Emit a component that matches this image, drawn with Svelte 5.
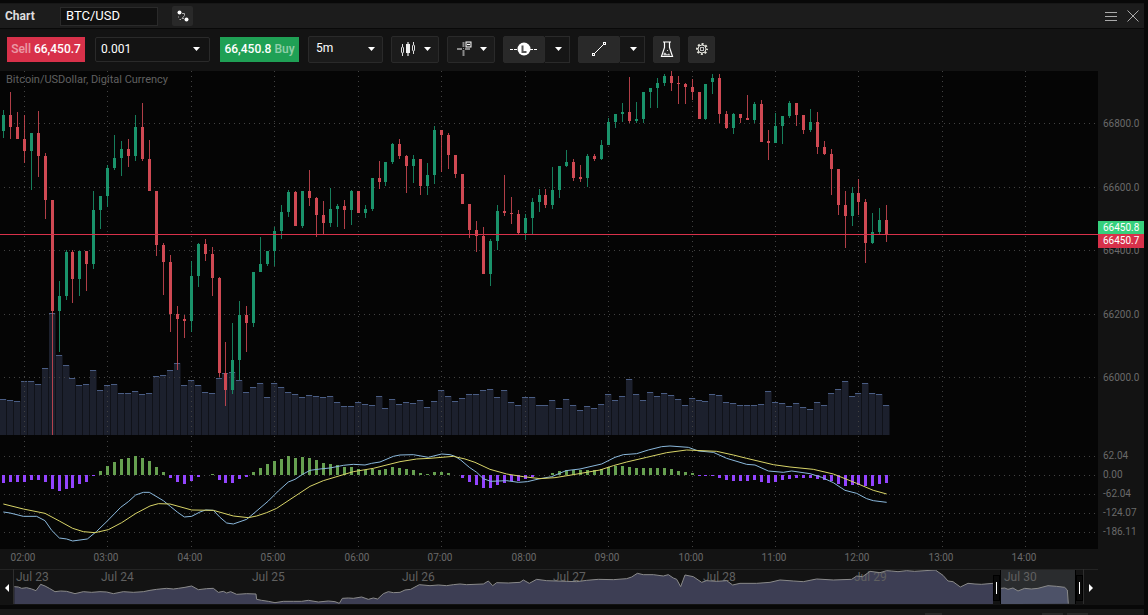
<script>
    const STEP = 6.956;
    const PLOT_HEIGHT = 478;
    const VOLUME_BASE = 364;
    const MACD_ZERO = 404;

    // direction, high, body top, body bottom, low
    const candles = `G39,44,60,67 R21,44,56,68 R41,56,68,68 R44,68,80,92 G62,62,80,119 R40,62,85,106 R82,85,129,148 R129,129,240,364
        G210,225,240,281 G179,181,225,229 R179,181,208,232 G180,180,208,225 R180,180,193,220 G120,139,193,198 G125,125,139,158 G94,97,125,136
        G64,87,97,99 G70,78,87,105 R68,78,85,96 G44,56,85,90 R32,56,88,90 R69,88,120,120 R120,120,174,185 R172,174,191,224
        R184,191,243,261 R235,243,248,299 R244,248,250,267 G190,205,250,261 G172,173,205,216 R168,173,183,190 R176,183,207,225 R206,207,302,306
        R271,302,319,335 G252,289,319,323 G230,244,289,309 R235,244,252,281 G201,201,252,256 G166,193,201,201 G180,180,193,195 G156,160,180,195
        G134,141,160,168 G119,121,141,146 R120,121,155,155 G120,120,155,157 R99,120,127,135 R126,127,144,166 R130,144,152,163 G117,138,152,156
        G133,135,138,156 R129,135,139,158 G119,120,139,154 R120,120,142,142 G134,138,142,147 G107,107,138,140 R90,107,111,118 G91,91,111,115
        G72,73,91,93 R68,73,85,88 R84,85,95,122 G84,88,95,112 R88,88,115,124 G92,104,115,124 G55,59,104,113 R59,59,64,101
        R62,64,84,98 R84,84,103,107 R103,103,133,133 R133,133,159,167 R150,159,165,181 R156,165,203,203 G168,170,203,215 G134,140,170,179
        R104,140,142,145 R126,142,143,153 R139,143,162,163 G143,147,162,169 G127,131,147,163 G118,124,131,141 R118,124,134,137 G96,119,134,138
        G95,95,119,127 G79,91,95,96 R88,91,107,110 R94,106,108,111 G83,85,107,116 R83,85,88,90 G69,74,88,89 G47,51,74,74
        G43,43,51,57 G32,41,43,51 R6,41,50,52 G31,48,50,52 G21,21,48,52 G17,17,21,37 G7,12,17,37 G3,5,12,15
        R0,5,12,20 R5,12,13,33 R12,13,16,33 R8,16,21,29 R21,21,48,48 G13,13,48,49 G3,7,11,23 R3,7,43,52
        R40,43,57,58 G42,43,57,63 R43,43,47,52 R24,47,49,49 G31,33,49,52 R29,33,71,71 R59,70,72,89 G42,55,72,72
        G45,45,55,73 G30,32,45,47 R32,32,44,55 R44,44,59,63 G38,51,59,61 R41,51,76,83 R70,76,83,84 R78,83,98,124
        R98,98,134,144 R120,134,145,177 G116,122,145,155 R108,122,131,144 R128,131,172,192 G142,161,172,173 G137,149,161,163 R134,149,163,171`
        .split(/\s+/)
        .map((item, i) => {
            const [high, top, bottom, low] = item.slice(1).split(',').map(Number);
            return { x: slot(i), up: item[0] === 'G', high, top, bottom, low };
        });

    const volumes = [
        36, 35, 34, 54, 54, 51, 67, 122, 80, 70, 57, 50, 51, 65, 45, 50, 51, 42, 42, 44, 41, 42, 59, 60, 65, 72, 50, 55, 50, 43, 42, 57,
        62, 63, 55, 43, 48, 52, 38, 52, 48, 43, 41, 38, 40, 39, 38, 39, 33, 29, 29, 33, 31, 30, 39, 27, 36, 31, 33, 32, 35, 28, 34, 45,
        39, 34, 37, 41, 41, 45, 46, 38, 45, 33, 30, 38, 38, 30, 30, 35, 27, 36, 30, 25, 29, 27, 31, 41, 35, 39, 56, 41, 35, 43, 39, 42,
        40, 36, 30, 37, 35, 34, 41, 40, 33, 32, 30, 30, 30, 31, 44, 33, 32, 29, 32, 28, 26, 33, 30, 42, 46, 54, 39, 42, 52, 42, 41, 30
    ];

    const histogram = [
        -8, -7, -7, -7, -5, -5, -7, -14, -16, -14, -13, -9, -7, -1, 4, 9, 13, 16, 17, 19, 17, 14, 8, 3, -3, -7, -9, -6, -2, 0, 1, -5,
        -8, -8, -4, -2, 3, 7, 11, 14, 16, 19, 17, 18, 17, 15, 12, 11, 10, 8, 8, 6, 5, 6, 5, 6, 8, 7, 6, 5, 2, 1, 3, 3,
        2, 0, -3, -7, -10, -13, -13, -10, -8, -6, -6, -4, -2, 0, 0, 2, 4, 5, 5, 5, 5, 5, 6, 8, 9, 9, 8, 7, 7, 7, 7, 7,
        6, 4, 3, 2, -1, -1, -1, -3, -5, -6, -6, -6, -5, -7, -8, -7, -5, -4, -3, -3, -3, -4, -5, -6, -9, -11, -10, -10, -11, -11, -9, -8
    ];

    // the line series are stored at three units per pixel
    const macd = '10,246 30,249 70,259 110,259 135,272 155,301 178,324 200,327 218,333 262,327 290,304 322,273 362,232 385,215 407,195 430,187 448,187 490,212 512,230 533,247 553,261 575,259 600,246 617,240 640,241 660,262 680,279 700,282 720,275 740,268 765,247 805,213 835,183 865,156 885,148 908,133 930,121 960,117 990,114 1030,106 1060,103 1095,105 1115,100 1140,96 1180,79 1200,75 1240,74 1285,82 1325,72 1350,74 1365,79 1382,90 1408,112 1430,127 1450,146 1472,154 1520,152 1555,157 1582,155 1620,146 1655,140 1698,122 1740,117 1805,102 1845,82 1870,74 1910,71 1945,60 1985,50 2010,48 2065,52 2095,63 2140,67 2180,85 2240,103 2265,105 2305,123 2350,127 2375,123 2430,131 2465,142 2500,158 2535,181 2570,190 2600,206 2620,212 2660,217';
    const signal = '10,222 70,237 135,250 178,273 218,295 250,305 285,308 325,299 365,278 408,250 450,228 475,221 510,222 575,240 640,241 700,258 745,263 770,258 800,248 830,235 930,169 970,152 1020,137 1060,125 1120,115 1200,95 1250,87 1290,85 1360,79 1395,87 1425,97 1470,118 1520,132 1570,140 1620,146 1665,143 1720,134 1800,120 1840,107 1880,96 1940,82 2000,68 2060,60 2150,64 2200,75 2240,85 2320,104 2370,111 2440,118 2500,132 2570,160 2620,181 2660,192';
    const history = '43,470 55,471 65,475 80,473 95,477 108,482 122,463 135,468 148,475 165,485 182,483 200,484 225,491 250,485 275,487 300,485 320,486 340,491 370,485 400,487 430,485 450,481 470,478 500,475 520,477 535,475 555,472 575,468 595,479 620,476 640,475 655,487 670,484 680,489 692,485 710,493 740,491 768,492 770,508 785,511 805,514 825,518 850,514 880,514 905,514 925,511 955,516 985,513 1005,515 1018,520 1027,505 1045,504 1060,505 1085,501 1105,508 1120,504 1133,507 1150,491 1165,485 1180,488 1200,487 1215,480 1232,478 1245,471 1258,464 1290,467 1315,465 1340,467 1360,464 1380,462 1400,464 1450,462 1465,453 1478,467 1490,458 1525,459 1560,457 1570,450 1588,460 1610,448 1640,452 1700,454 1730,455 1760,451 1795,448 1840,449 1880,446 1895,441 1912,430 1930,434 1960,434 1990,438 2005,434 2020,444 2030,448 2042,470 2055,435 2080,440 2105,457 2120,452 2150,454 2180,452 2198,465 2220,460 2270,460 2310,457 2340,450 2380,453 2410,455 2450,447 2500,450 2555,448 2570,438 2588,440 2610,424 2640,428 2660,422 2674,423 2694,425 2720,422 2744,424 2775,422 2806,420 2829,436 2844,453 2859,455 2881,471 2904,460 2925,462 2944,463 2979,460';
    const selected = '3003,475 3014,474 3024,478 3039,474 3054,483 3074,475 3094,477 3114,475 3144,467 3170,469 3194,472 3202,480 3205,521';

    const hours = [
        ['02:00', 24], ['03:00', 107], ['04:00', 191], ['05:00', 274], ['06:00', 358], ['07:00', 441], ['08:00', 525],
        ['09:00', 608], ['10:00', 692], ['11:00', 775], ['12:00', 858], ['13:00', 942], ['14:00', 1025]
    ];
    const prices = [['66800.0', 52], ['66600.0', 116], ['66400.0', 179], ['66200.0', 243], ['66000.0', 306]];
    const levels = [['62.04', 385], ['0.00', 404], ['-62.04', 423], ['-124.07', 442], ['-186.11', 461]];
    const days = [['Jul 23', 16], ['Jul 24', 101], ['Jul 25', 252], ['Jul 26', 402], ['Jul 27', 553], ['Jul 28', 703], ['Jul 29', 854], ['Jul 30', 1004]];

    let symbol = $state('BTC/USD');
    let amount = $state('0.001');
    let period = $state('5m');

    function slot(i) {
        return Math.floor(3.4 + i * STEP);
    }
</script>

{#snippet caret()}
    <svg class="caret" width="7" height="4" viewBox="0 0 7 4" aria-hidden="true"><path d="M0 0h7L3.5 4z" fill="#fff" /></svg>
{/snippet}

<main>
    <header>
        <h1>Chart</h1>
        <input class="symbol" aria-label="Symbol" bind:value={symbol} />
        <button class="link" aria-label="Link window">
            <svg width="12" height="12" viewBox="0 0 12 12">
                <circle cx="2.500" cy="2.500" r="2" fill="#fff" />
                <circle cx="9.500" cy="9.500" r="2" fill="#fff" />
                <path d="M5 3.500h2.500v2L5 8.500h2M1.500 6.500v1M2.500 9.500h1.500" fill="none" stroke="#aaa" />
            </svg>
        </button>
        <div class="window">
            <button aria-label="Menu">
                <svg width="12" height="11" viewBox="0 0 12 11"><path d="M0 1.500h12M0 5.500h12M0 9.500h12" stroke="#aaa" /></svg>
            </button>
            <button aria-label="Close">
                <svg width="12" height="12" viewBox="0 0 12 12"><path d="M.5.5l11 11M11.500.5l-11 11" stroke="#aaa" /></svg>
            </button>
        </div>
    </header>

    <div class="toolbar">
        <div class="trade">
            <button class="sell"><span>Sell</span> 66,450.7</button>
            <div class="field amount">
                <select aria-label="Amount" bind:value={amount}>
                    <option>0.001</option>
                    <option>0.01</option>
                    <option>0.1</option>
                </select>
                {@render caret()}
            </div>
            <button class="buy">66,450.8 <span>Buy</span></button>
        </div>
        <div class="field period">
            <select aria-label="Period" bind:value={period}>
                <option>1m</option>
                <option>5m</option>
                <option>1h</option>
            </select>
            {@render caret()}
        </div>
        <button class="tool wide" aria-label="Chart type">
            <svg width="16" height="16" viewBox="0 0 16 16">
                <path d="M2.500 3v3M2.500 12v3M13.500 1v3M13.500 10v3" stroke="#ddd" />
                <rect x="1.500" y="6" width="2" height="6" rx="1" fill="none" stroke="#ddd" />
                <rect x="12.500" y="4" width="2" height="6" rx="1" fill="none" stroke="#ddd" />
                <path d="M8 1v14" stroke="#999" stroke-width="2" />
                <rect x="6" y="3" width="4" height="9" fill="#eee" />
            </svg>
            {@render caret()}
        </button>
        <button class="tool wide" aria-label="Crosshair">
            <svg width="16" height="16" viewBox="0 0 16 16">
                <path d="M1 8h5M9 8h5M7.500 1v5M7.500 9v6" stroke="#888" stroke-width="2" />
                <rect x="7" y="7" width="1" height="1" fill="#888" />
                <rect x="10" y="1" width="5" height="5" fill="#333" stroke="#fff" />
                <path d="M11 3.500h3" stroke="#fff" />
            </svg>
            {@render caret()}
        </button>
        <div class="split">
            <button class="tool" aria-label="Order lines">
                <svg width="28" height="14" viewBox="0 0 28 14">
                    <path d="M0 7.500h28" stroke="#fff" stroke-dasharray="3 1" />
                    <circle cx="14" cy="7" r="6.500" fill="#fff" />
                    <path d="M12.500 3.500v6.500h4" fill="none" stroke="#555" stroke-width="2" />
                </svg>
            </button>
            <button class="more" aria-label="Order line options">{@render caret()}</button>
        </div>
        <div class="split">
            <button class="tool" aria-label="Draw line">
                <svg width="14" height="14" viewBox="0 0 14 14">
                    <path d="M3 11l8-8" stroke="#fff" />
                    <rect x=".5" y="11.500" width="2" height="2" fill="none" stroke="#fff" />
                    <rect x="11.500" y=".5" width="2" height="2" fill="none" stroke="#fff" />
                </svg>
            </button>
            <button class="more" aria-label="Drawing tools">{@render caret()}</button>
        </div>
        <button class="tool square" aria-label="Indicators">
            <svg width="14" height="17" viewBox="0 0 14 17">
                <path d="M3 1h8M4.500 1v5.500L1.500 15.500h11L9.500 6.500V1" fill="none" stroke="#fff" stroke-width="1.200" />
                <path d="M3.500 14.500v-2l1.500-1 2 2 2-1 1.500 2z" fill="#ccc" />
                <rect x="7" y="9" width="1" height="1" fill="#ccc" />
            </svg>
        </button>
        <button class="tool square" aria-label="Settings">
            <svg width="14" height="14" viewBox="0 0 14 14" fill="none" stroke="#e4e4dc">
                <circle cx="7" cy="7" r="5" stroke-width="2" stroke-dasharray="2 1.927" stroke-dashoffset="1" />
                <circle cx="7" cy="7" r="4" />
                <rect x="5.500" y="5.500" width="3" height="3" stroke="#bbb" />
            </svg>
        </button>
    </div>

    <div class="chart">
        <svg class="plot" height={PLOT_HEIGHT} role="img" aria-label="Bitcoin/USDollar candles">
            <g class="volume">
                {#each volumes as height, i}
                    <rect class="bar-back" x={slot(i) - 3} y={VOLUME_BASE - height} width="7" {height} />
                    <rect class="bar" x={slot(i) - 3} y={VOLUME_BASE - height} width="6" {height} />
                    <rect class="cap" x={slot(i) - 3} y={VOLUME_BASE - height} width="6" height="1" />
                {/each}
            </g>
            <g class="grid">
                {#each hours as [, x]}
                    <line x1={x + 0.5} x2={x + 0.5} y1="0" y2="476" />
                {/each}
                {#each [...prices, ...levels] as [, y]}
                    <line x1="4" x2="100%" y1={y + 0.5} y2={y + 0.5} />
                {/each}
            </g>
            <text class="title" x="6" y="12">Bitcoin/USDollar, Digital Currency</text>
            {#each candles as c}
                <g class={c.up ? 'up' : 'down'}>
                    <rect class="wick" x={c.x} y={c.high} width="1" height={c.low - c.high} />
                    <rect x={c.x - 1} y={c.top} width="3" height={c.bottom - c.top} />
                </g>
            {/each}
            {#each histogram as value, i}
                <rect
                    fill={value > 0 ? '#66a050' : '#9344ff'}
                    x={slot(i) - 1}
                    y={value > 0 ? MACD_ZERO - value : MACD_ZERO}
                    width="3"
                    height={Math.abs(value)}
                />
            {/each}
            <g class="series" transform="translate(0 359) scale(.33333)">
                <polyline points={macd} stroke="#8ab8dc" />
                <polyline points={signal} stroke="#d8d468" />
            </g>
            <rect class="last" x="0" y="163" width="100%" height="1" />
        </svg>
        <svg class="scale" height={PLOT_HEIGHT}>
            {#each prices as [label, y]}
                <text x="5" y={y + 4}>{label}</text>
            {/each}
            {#each levels as [label, y]}
                <text x="5" y={y + 3}>{label}</text>
            {/each}
            <rect y="150" width="46" height="13" fill="#36d07c" />
            <rect y="163" width="46" height="14" fill="#d8314a" />
            <text class="tag" x="5" y="160">66450.8</text>
            <text class="tag" x="5" y="173">66450.7</text>
        </svg>
    </div>

    <svg class="times" height="20">
        {#each hours as [label, x]}
            <text x={x - 1} y="12" text-anchor="middle">{label}</text>
        {/each}
    </svg>

    <svg class="overview" height="36">
        <rect class="range" x="1001" y="1" width="74" height="34" />
        <g class="area" transform="translate(0 -139) scale(.33333)">
            <polygon points="43,522 {history} 2979,522" fill="#3d3e54" />
            <polygon points="3003,522 {selected}" fill="#4d5268" />
        </g>
        {#each days as [label, x]}
            <text {x} y="12">{label}</text>
        {/each}
        <g class="area line" transform="translate(0 -139) scale(.33333)">
            <polyline points={history} />
            <polyline points={selected} />
        </g>
        <path d="M0 .5h1098" stroke="#242424" />
        <path d="M13.500 0v35M1083.500 0v35" stroke="#2e2e2e" />
        <path d="M1000.500 1v34M1075.500 1v34" stroke="#000" />
        <rect class="handle" x="993.500" y="6.500" width="6" height="25" />
        <rect class="handle" x="1076.500" y="6.500" width="6" height="25" />
        <path d="M996.500 13v12M1079.500 13v12" stroke="#fff" />
        <path d="M9 15v8l-4-4zM1089 15v8l4-4z" fill="#fff" />
    </svg>
</main>

<footer>
    <span></span>
    <span></span>
    <span></span>
</footer>

<style>
    :global(body) {
        background: #080808;
        color: #e8e8e8;
        font-family: Roboto, "Liberation Sans", sans-serif;
        font-size: 12px;
        overflow: hidden;
    }

    main {
        margin: 3px 4px 0 0;
        border-top: 1px solid #171717;
        background: #131313;
    }

    svg {
        display: block;
    }

    button,
    input,
    select {
        box-sizing: border-box;
        margin: 0;
        padding: 0;
        border: 0;
        border-radius: 0;
        background: none;
        color: inherit;
        font: inherit;
    }

    header {
        display: flex;
        align-items: center;
        height: 24px;
        padding: 0 5px;
        border-bottom: 1px solid #090909;
        background: #1c1c1c;
    }

    h1 {
        width: 55px;
        margin: 0;
        font-size: 12px;
        font-weight: 700;
        color: #ddd;
    }

    .symbol {
        width: 98px;
        height: 19px;
        padding: 0 5px 1px;
        border: 1px solid #2a2a2a;
        background: #101010;
        color: #fff;
        font-size: 13px;
    }

    .link {
        display: grid;
        place-items: center;
        width: 21px;
        height: 20px;
        margin-left: 14px;
        border-radius: 2px;
        background: #292929;
    }

    .window {
        display: flex;
        align-items: center;
        gap: 10px;
        margin-left: auto;
    }

    .toolbar {
        display: flex;
        align-items: center;
        gap: 8px;
        height: 40px;
        padding: 0 7px 2px;
    }

    .trade {
        display: flex;
        gap: 10px;
        margin-right: 1px;
    }

    .sell,
    .buy {
        height: 25px;
        color: #fff;
        font-weight: 500;
        white-space: nowrap;
    }

    .sell {
        width: 78px;
        background: #d8314a;
    }

    .buy {
        width: 79px;
        background: #1fa055;
    }

    .sell span,
    .buy span {
        opacity: 0.5;
    }

    .field {
        display: grid;
        align-items: center;
        box-sizing: border-box;
        border: 1px solid #2a2a2a;
        border-radius: 2px;
    }

    .field select,
    .field .caret {
        grid-area: 1 / 1;
    }

    .field select {
        width: 100%;
        height: 100%;
        appearance: none;
        color: #fff;
    }

    .field .caret {
        justify-self: end;
        pointer-events: none;
    }

    .amount {
        width: 115px;
        height: 25px;
        padding: 0 9px 0 5px;
    }

    .period {
        width: 75px;
        height: 27px;
        padding: 0 7px;
        background: #1b1b1b;
    }

    .period select {
        padding-bottom: 2px;
    }

    .tool {
        display: flex;
        align-items: center;
        justify-content: center;
        width: 42px;
        height: 27px;
        border: 1px solid #2a2a2a;
        border-radius: 2px;
        background: #292929;
    }

    .wide {
        justify-content: space-between;
        width: 48px;
        padding: 0 7px 0 8px;
        background: #1b1b1b;
    }

    .square {
        width: 27px;
    }

    .split {
        display: flex;
    }

    .more {
        display: grid;
        place-items: center;
        width: 25px;
        height: 27px;
        padding-left: 2px;
        border: 1px solid #2a2a2a;
        border-left: 0;
        background: #161616;
    }

    .chart {
        display: flex;
    }

    .plot {
        flex: 1;
        min-width: 0;
        background: #050505;
    }

    .scale {
        width: 46px;
        flex: none;
    }

    .scale text,
    .times text {
        fill: #6a6a6a;
        font-size: 10px;
    }

    .scale .tag {
        fill: #fff;
    }

    .title {
        fill: #606060;
        font-size: 11px;
    }

    .grid line {
        stroke: #424242;
        stroke-dasharray: 1 4;
    }

    .bar-back {
        fill: #101219;
    }

    .bar {
        fill: #1c202d;
    }

    .cap {
        fill: #4a5d84;
    }

    .up {
        fill: #1a936b;
    }

    .down {
        fill: #cf4953;
    }

    .wick {
        opacity: 0.85;
    }

    .last {
        fill: #d8314a;
    }

    .series,
    .line {
        fill: none;
    }

    .series polyline,
    .line polyline {
        vector-effect: non-scaling-stroke;
        stroke-linejoin: round;
    }

    .line {
        stroke: #8a8a8a;
    }

    .times,
    .overview {
        width: 100%;
    }

    .overview text {
        fill: #606060;
        font-size: 12px;
    }

    .range {
        fill: #2a2c2e;
    }

    .handle {
        fill: #0a0a0a;
        stroke: #000;
    }

    footer {
        display: flex;
        justify-content: flex-end;
        align-items: flex-end;
        gap: 4px;
        height: 6px;
        margin: 4px 4px 0 0;
        padding-right: 56px;
        background: #181818;
    }

    footer span {
        width: 21px;
        height: 2px;
        background: #292929;
    }

    footer span:first-child {
        width: 17px;
        margin-right: 96px;
    }
</style>
